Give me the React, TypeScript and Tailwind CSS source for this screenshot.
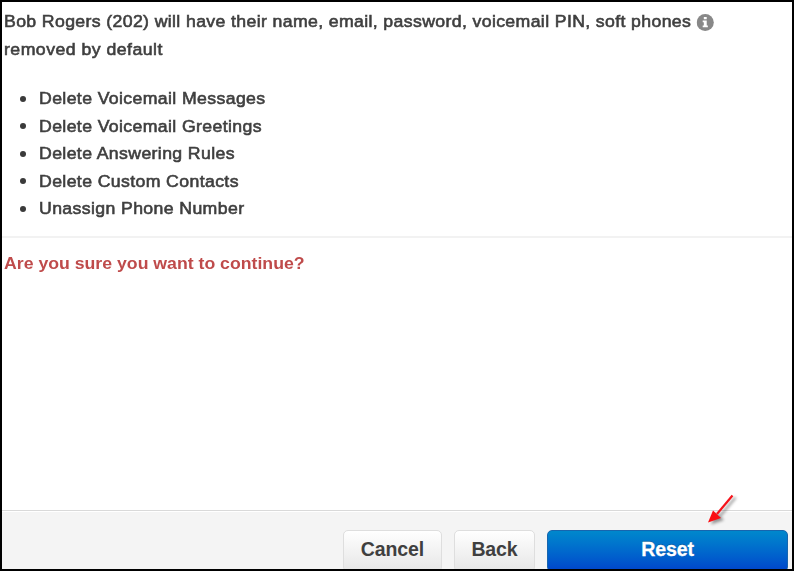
const items = [
  'Delete Voicemail Messages',
  'Delete Voicemail Greetings',
  'Delete Answering Rules',
  'Delete Custom Contacts',
  'Unassign Phone Number',
];

function InfoIcon() {
  return (
    <svg viewBox="0 0 17 17" preserveAspectRatio="none" className="ml-[5.5px] inline-block h-[17px] w-[16.5px] align-[-4px]">
      <circle cx="8.5" cy="8.5" r="8.5" fill="#888" />
      <path d="M7.1 3h2.9v2.2H7.1zM6 6.6h4v5h1.1v1.7H6v-1.7h1.1V8.3H6z" fill="#fff" />
    </svg>
  );
}

function Arrow() {
  return (
    <svg
      viewBox="0 0 36 36"
      className="pointer-events-none absolute top-[488px] left-[701px] size-[36px] drop-shadow-[3px_2px_1.5px_rgba(0,0,0,0.4)]"
    >
      <path d="M29.5 5.5L14 24" stroke="#f5141c" strokeWidth="2.2" />
      <path d="M5 32.5L10 20.5L18 28z" fill="#fa0f14" />
    </svg>
  );
}

export default function App() {
  return (
    <div className="relative flex h-[571px] w-[794px] flex-col overflow-hidden border-2 border-black bg-white font-['Liberation_Sans',Arial,sans-serif] text-[17px] leading-[27.5px] text-[#3f3f3f]">
      <main className="flex-1">
        <p className="ml-[2px] origin-left scale-x-[1.04] pt-[6px] tracking-[0.35px] whitespace-nowrap [-webkit-text-stroke:0.6px_#3f3f3f]">
          Bob Rogers (202) will have their name, email, password, voicemail PIN, soft phones
          <InfoIcon />
          <br />
          <span className="tracking-[0.45px]">removed by default</span>
        </p>
        <ul className="mt-[22px] tracking-[0.36px] [-webkit-text-stroke:0.6px_#3f3f3f]">
          {items.map((item) => (
            <li key={item} className="flex items-center pl-[18px]">
              <span className="mr-[12.6px] size-[6px] rounded-full bg-[#3a3a3a]" />
              <span className="origin-left scale-x-[1.04]">{item}</span>
            </li>
          ))}
        </ul>
        <hr className="mt-[13px] border-t-2 border-[#f2f2f2]" />
        <p className="mt-[12px] ml-[2px] origin-left scale-x-[1.04] font-bold text-[#bf4b4b]">
          Are you sure you want to continue?
        </p>
      </main>
      <footer className="flex h-[59px] shrink-0 items-start justify-end gap-[12px] overflow-hidden border-t border-[#d9d9d9] bg-[#f4f4f4] pt-[19px] pr-[4px] text-[19.5px] font-bold tracking-[-0.1px] shadow-[inset_0_1px_0_#fff]">
        <button className="h-[42px] w-[99px] rounded-[5px] border border-[#dedede] bg-linear-to-b from-white to-[#e6e6e6] pb-[3px]">
          Cancel
        </button>
        <button className="h-[42px] w-[81px] rounded-[5px] border border-[#dedede] bg-linear-to-b from-white to-[#e6e6e6] pb-[3px]">
          Back
        </button>
        <button className="h-[42px] w-[241px] rounded-[5px] border border-[#1765ae] bg-linear-to-b from-[#0088cc] to-[#0044cc] pb-[3px] text-white [-webkit-text-stroke:0.3px_#fff] [text-shadow:0_-1px_0_rgba(0,0,0,0.25)]">
          Reset
        </button>
      </footer>
      <Arrow />
    </div>
  );
}
